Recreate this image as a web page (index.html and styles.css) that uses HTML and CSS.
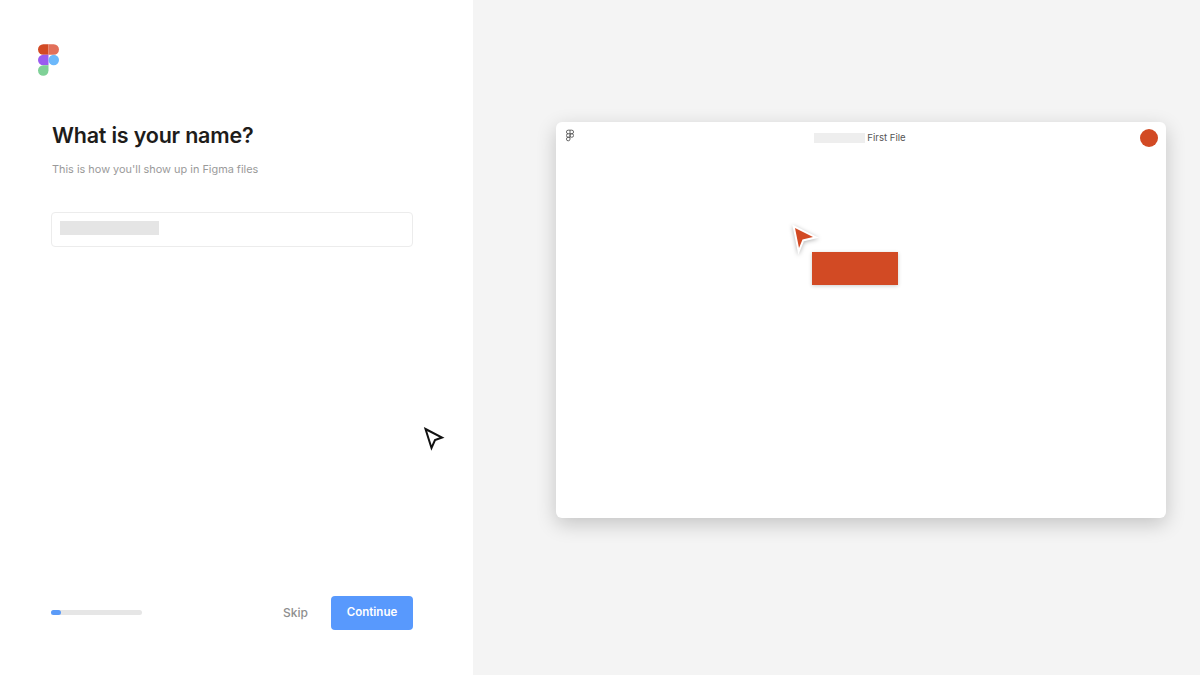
FILE: index.html
```html
<!DOCTYPE html>
<html lang="en">
<head>
  <meta charset="UTF-8">
  <meta name="viewport" content="width=device-width, initial-scale=1">
  <title>What is your name?</title>
  <link rel="stylesheet" href="styles.css">
</head>
<body>

<div class="page">
  <div class="left">
    <svg class="logo" width="21" height="32" viewBox="0 0 22 33">
      <path fill="#d24a24" d="M5.500 0H11v11H5.500a5.500 5.500 0 0 1 0-11z"/>
      <path fill="#e2705a" d="M11 0h5.500a5.500 5.500 0 0 1 0 11H11z"/>
      <path fill="#9a5cf0" d="M5.500 11H11v11H5.500a5.500 5.500 0 0 1 0-11z"/>
      <circle fill="#6cb8fb" cx="16.500" cy="16.500" r="5.500"/>
      <path fill="#7fd197" d="M5.500 22H11v5.500a5.500 5.500 0 1 1-5.500-5.500z"/>
    </svg>

    <div class="form">
      <h1>What is your name?</h1>
      <p class="sub">This is how you'll show up in Figma files</p>
      <div class="input">
        <span class="input-mask"></span>
      </div>
    </div>

    <div class="footer">
      <div class="progress"><div class="progress-fill"></div></div>
      <button class="skip">Skip</button>
      <button class="continue">Continue</button>
    </div>

    <svg class="cursor" width="22" height="24" viewBox="0 0 22 24">
      <path fill="#fff" stroke="#111" stroke-width="2" d="M2.500 2l16.500 8.500-7 2.500-3.500 8z"/>
    </svg>
  </div>

  <div class="right">
    <div class="window">
      <div class="toolbar">
        <svg class="mini-logo" width="8" height="13" viewBox="0 0 9 13">
          <g fill="none" stroke="#555" stroke-width="1">
            <path d="M2.500.5h4a2 2 0 0 1 0 4h-4a2 2 0 0 1 0-4z"/>
            <path d="M4.500.5v8M2.500 4.500a2 2 0 0 0 0 4h2"/>
            <circle cx="6.500" cy="6.500" r="2"/>
            <path d="M2.500 8.500h2v2a2 2 0 1 1-2-2z"/>
          </g>
        </svg>
        <div class="file-title">
          <span class="title-mask"></span>
          <span>First File</span>
        </div>
        <span class="avatar"></span>
      </div>
      <div class="canvas">
        <svg class="canvas-cursor" width="28" height="32" viewBox="0 0 28 32">
          <path class="canvas-arrow" d="M4 6l18 9-10.500 2.500-3.500 8.500z"/>
        </svg>
        <div class="shape"></div>
      </div>
    </div>
  </div>
</div>

</body>
</html>
```

FILE: styles.css
```css
body {
  margin: 0;
  font-family: Inter, "Liberation Sans", sans-serif;
  background: #f4f4f4;
}
.page {
  display: flex;
  height: 675px;
  overflow: hidden;
}
.left {
  position: relative;
  width: 473px;
  box-sizing: border-box;
  background: white;
  padding: 44px 60px 45px 38px;
  display: flex;
  flex-direction: column;
}
.logo {
  display: block;
}
.form {
  flex: 1;
  padding: 46px 0 0 13px;
}
h1 {
  margin: 0;
  padding-left: 1px;
  font-size: 21.500px;
  line-height: 27px;
  font-weight: 600;
  color: #1e1c1a;
  letter-spacing: -0.2px;
}
.sub {
  margin: 12px 0 0;
  padding-left: 1px;
  font-size: 10.900px;
  line-height: 16px;
  color: #9a9a9a;
}
.input {
  margin-top: 35px;
  height: 35px;
  box-sizing: border-box;
  border: 1px solid #ececec;
  border-radius: 4px;
  padding: 8px;
}
.input-mask {
  display: block;
  width: 99px;
  height: 14px;
  background: #e5e5e5;
}
.footer {
  display: flex;
  align-items: center;
  padding-left: 13px;
}
.progress {
  width: 91px;
  height: 5px;
  margin-top: -1px;
  border-radius: 3px;
  background: #e6e6e6;
}
.progress-fill {
  width: 10px;
  height: 5px;
  border-radius: 3px;
  background: #5b9bf8;
}
button {
  border: none;
  font-family: inherit;
  font-size: 11.500px;
  cursor: pointer;
}
.skip {
  margin-left: auto;
  margin-right: 23px;
  padding: 0 0 1px;
  background: none;
  color: #8e8e8e;
  font-size: 12px;
  font-weight: 500;
}
.continue {
  width: 82px;
  height: 34px;
  padding: 0 0 2px;
  border-radius: 4px;
  background: #5899fd;
  color: white;
  font-weight: 600;
}
.cursor {
  position: absolute;
  left: 423px;
  top: 427px;
}
.right {
  flex: 1;
  padding: 122px 34px 0 83px;
}
.window {
  height: 396px;
  background: white;
  border-radius: 6px;
  box-shadow: 0 6px 20px rgba(0,0,0,0.2);
  display: flex;
  flex-direction: column;
}
.toolbar {
  display: flex;
  justify-content: space-between;
  padding: 7px 8px 0 10px;
  height: 25px;
}
.mini-logo {
  display: block;
}
.file-title {
  display: flex;
  align-items: center;
  gap: 2px;
  height: 17px;
  margin-left: 6px;
  font-size: 9.600px;
  color: #555;
}
.title-mask {
  width: 51px;
  height: 10px;
  background: #eeeeee;
}
.avatar {
  width: 18px;
  height: 18px;
  border-radius: 50%;
  background: #d24a24;
}
.canvas {
  position: relative;
  flex: 1;
}
.canvas-cursor {
  position: absolute;
  left: 235px;
  top: 68px;
  overflow: visible;
  filter: drop-shadow(0 1px 2px rgba(0,0,0,0.3));
}
.canvas-arrow {
  fill: #d24a24;
  stroke: white;
  stroke-width: 4;
  paint-order: stroke;
}
.shape {
  position: absolute;
  left: 256px;
  top: 98px;
  width: 86px;
  height: 33px;
  background: #d24a24;
  box-shadow: 0 1px 4px rgba(0,0,0,0.2);
}
```
